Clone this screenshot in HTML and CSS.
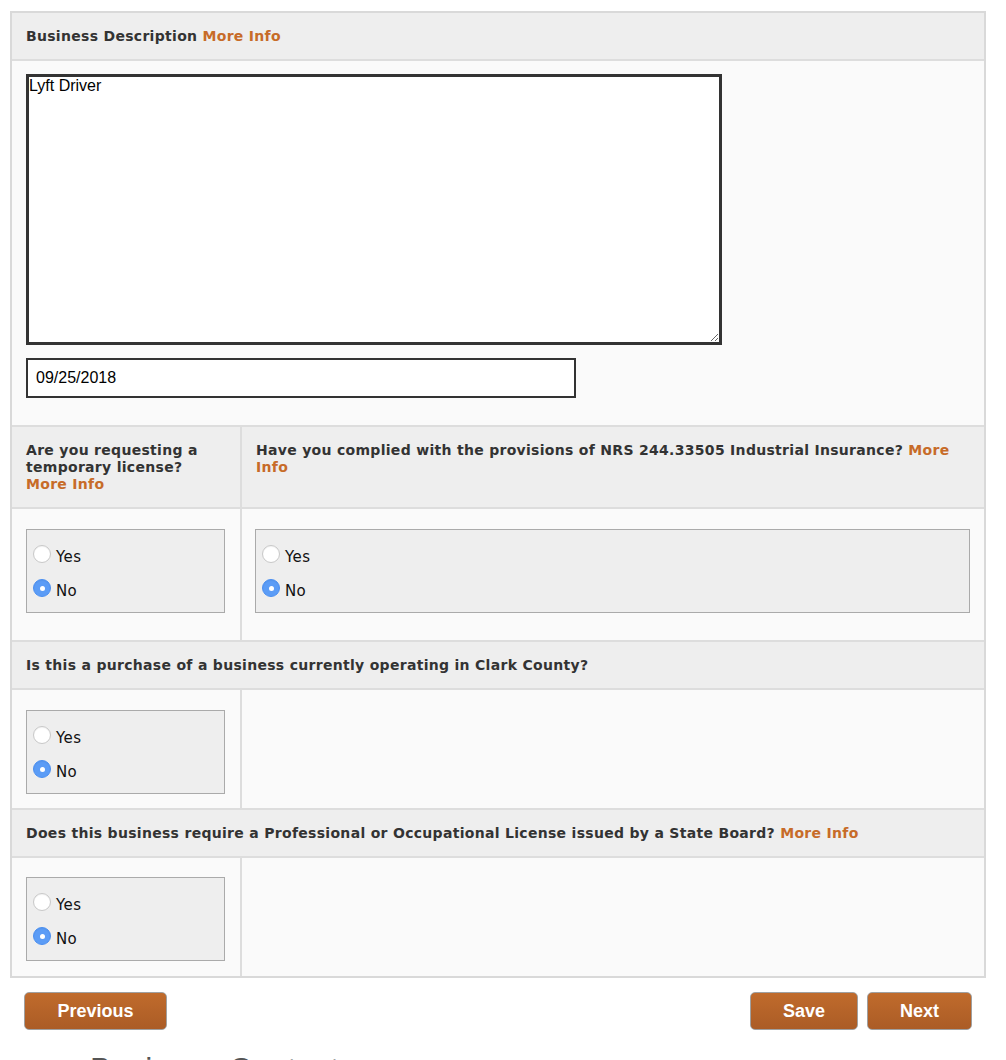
FILE: index.html
```html
<!DOCTYPE html>
<html lang="en">
<head>
    <meta charset="UTF-8">
    <meta name="viewport" content="width=device-width, initial-scale=1.0">
    <title>Business License Application</title>
    <link rel="stylesheet" href="styles.css">
</head>
<body>

    <div class="form-panel">

        <!-- Business description -->
        <div class="row-head">Business Description <a href="#" class="more-info">More Info</a></div>
        <div class="row-body desc-body">
            <textarea class="desc-input">Lyft Driver</textarea>
            <input type="text" class="date-input" value="09/25/2018">
        </div>

        <!-- Temporary license / Industrial insurance -->
        <div class="split">
            <div class="row-head cell-left">Are you requesting a temporary license? <a href="#" class="more-info">More Info</a></div>
            <div class="row-head cell-right">Have you complied with the provisions of NRS 244.33505 Industrial Insurance? <a href="#" class="more-info">More Info</a></div>
        </div>
        <div class="split">
            <div class="row-body cell-left tall">
                <div class="choice-box">
                    <label><input type="radio" name="temporary"> Yes</label>
                    <label><input type="radio" name="temporary" checked> No</label>
                </div>
            </div>
            <div class="row-body cell-right tall">
                <div class="choice-box wide">
                    <label><input type="radio" name="insurance"> Yes</label>
                    <label><input type="radio" name="insurance" checked> No</label>
                </div>
            </div>
        </div>

        <!-- Purchase of business -->
        <div class="row-head">Is this a purchase of a business currently operating in Clark County?</div>
        <div class="split">
            <div class="row-body cell-left">
                <div class="choice-box">
                    <label><input type="radio" name="purchase"> Yes</label>
                    <label><input type="radio" name="purchase" checked> No</label>
                </div>
            </div>
            <div class="row-body cell-right"></div>
        </div>

        <!-- State board license -->
        <div class="row-head">Does this business require a Professional or Occupational License issued by a State Board? <a href="#" class="more-info">More Info</a></div>
        <div class="split last">
            <div class="row-body cell-left">
                <div class="choice-box">
                    <label><input type="radio" name="stateboard"> Yes</label>
                    <label><input type="radio" name="stateboard" checked> No</label>
                </div>
            </div>
            <div class="row-body cell-right"></div>
        </div>
    </div>

    <!-- Navegação -->
    <div class="nav-buttons">
        <button class="btn btn-prev">Previous</button>
        <div class="nav-right">
            <button class="btn btn-save">Save</button>
            <button class="btn btn-next">Next</button>
        </div>
    </div>

    <h2 class="next-section">Business Contact</h2>

</body>
</html>
```

FILE: styles.css
```css
/* CSS */
body {
    margin: 0;
    padding: 11px 20px 0 10px;
    background-color: #fff;
    font-family: "DejaVu Sans", Verdana, sans-serif;
    color: #333;
    overflow: hidden;
}

.form-panel {
    width: 972px;
    border: 2px solid #d9d9d9;
    background-color: #fafafa;
}

.row-head {
    background-color: #eee;
    font-size: 14px;
    font-weight: bold;
    line-height: 17px;
    padding: 15px 14px 14px;
    border-bottom: 2px solid #ddd;
    letter-spacing: 0.3px;
}

.more-info {
    color: #c76b28;
    text-decoration: none;
}

.row-body {
    background-color: #fafafa;
    border-bottom: 2px solid #ddd;
}

.desc-body {
    display: flex;
    flex-direction: column;
    align-items: flex-start;
    gap: 13px;
    padding: 13px 14px 27px;
}

.desc-input {
    width: 696px;
    height: 271px;
    box-sizing: border-box;
    border: 3px solid #333;
    padding: 0;
    font-family: "Liberation Sans", Arial, sans-serif;
    font-size: 16px;
    line-height: 18px;
    color: #000;
    resize: both;
    background: #fff;
}

.date-input {
    width: 550px;
    height: 40px;
    box-sizing: border-box;
    border: 2px solid #333;
    padding: 0 8px;
    font-family: "Liberation Sans", Arial, sans-serif;
    font-size: 16px;
    color: #000;
    background: #fff;
}

.split {
    display: flex;
}

.split .row-head,
.split .row-body {
    box-sizing: border-box;
}

.cell-left {
    width: 230px;
    flex-shrink: 0;
    border-right: 2px solid #ddd;
}

.cell-right {
    flex: 1;
}

.row-body.cell-left,
.row-body.cell-right {
    padding: 20px 14px 14px;
}

.row-body.cell-right {
    padding-left: 13px;
}

.row-body.tall {
    padding-top: 20px;
    padding-bottom: 27px;
}

.split.last .row-body {
    border-bottom: none;
    padding-top: 19px;
    padding-bottom: 15px;
}

.choice-box {
    width: 199px;
    box-sizing: border-box;
    height: 84px;
    background-color: #eee;
    border: 1px solid #aaa;
    padding: 10px 6px 4px;
    display: flex;
    flex-direction: column;
}

.choice-box.wide {
    width: 715px;
}

.choice-box label {
    display: flex;
    align-items: center;
    gap: 5px;
    height: 34px;
    flex-shrink: 0;
    font-size: 15px;
    letter-spacing: 0.4px;
    color: #111;
}

.choice-box label input {
    appearance: none;
    -webkit-appearance: none;
    margin: 0;
    width: 18px;
    height: 18px;
    border-radius: 50%;
    border: 1px solid #c8c8c8;
    background: #fff;
    box-shadow: inset 0 1px 1px rgba(0, 0, 0, 0.05);
    position: relative;
    top: -3px;
}

.choice-box label input:checked {
    border-color: #4b8ff0;
    background: #5b9cf6;
}

.choice-box label input:checked::after {
    content: "";
    position: absolute;
    left: 5.5px;
    top: 5.5px;
    width: 5px;
    height: 5px;
    border-radius: 50%;
    background: #fff;
}

/* Navegação */
.nav-buttons {
    width: 948px;
    display: flex;
    justify-content: space-between;
    margin: 14px 0 0 14px;
}

.nav-right {
    display: flex;
    gap: 9px;
}

.btn {
    height: 38px;
    font-family: "Liberation Sans", Arial, sans-serif;
    font-size: 18px;
    font-weight: bold;
    color: #fff;
    background: linear-gradient(#c06b2c, #ab5c26);
    border: 1px solid #a0a0a0;
    border-radius: 5px;
    cursor: pointer;
}

.btn-prev {
    width: 143px;
}

.btn-save {
    width: 108px;
}

.btn-next {
    width: 105px;
}

.next-section {
    margin: 21px 0 0 80px;
    font-family: "Liberation Sans", Arial, sans-serif;
    font-size: 32px;
    font-weight: normal;
    color: #555;
}
```
